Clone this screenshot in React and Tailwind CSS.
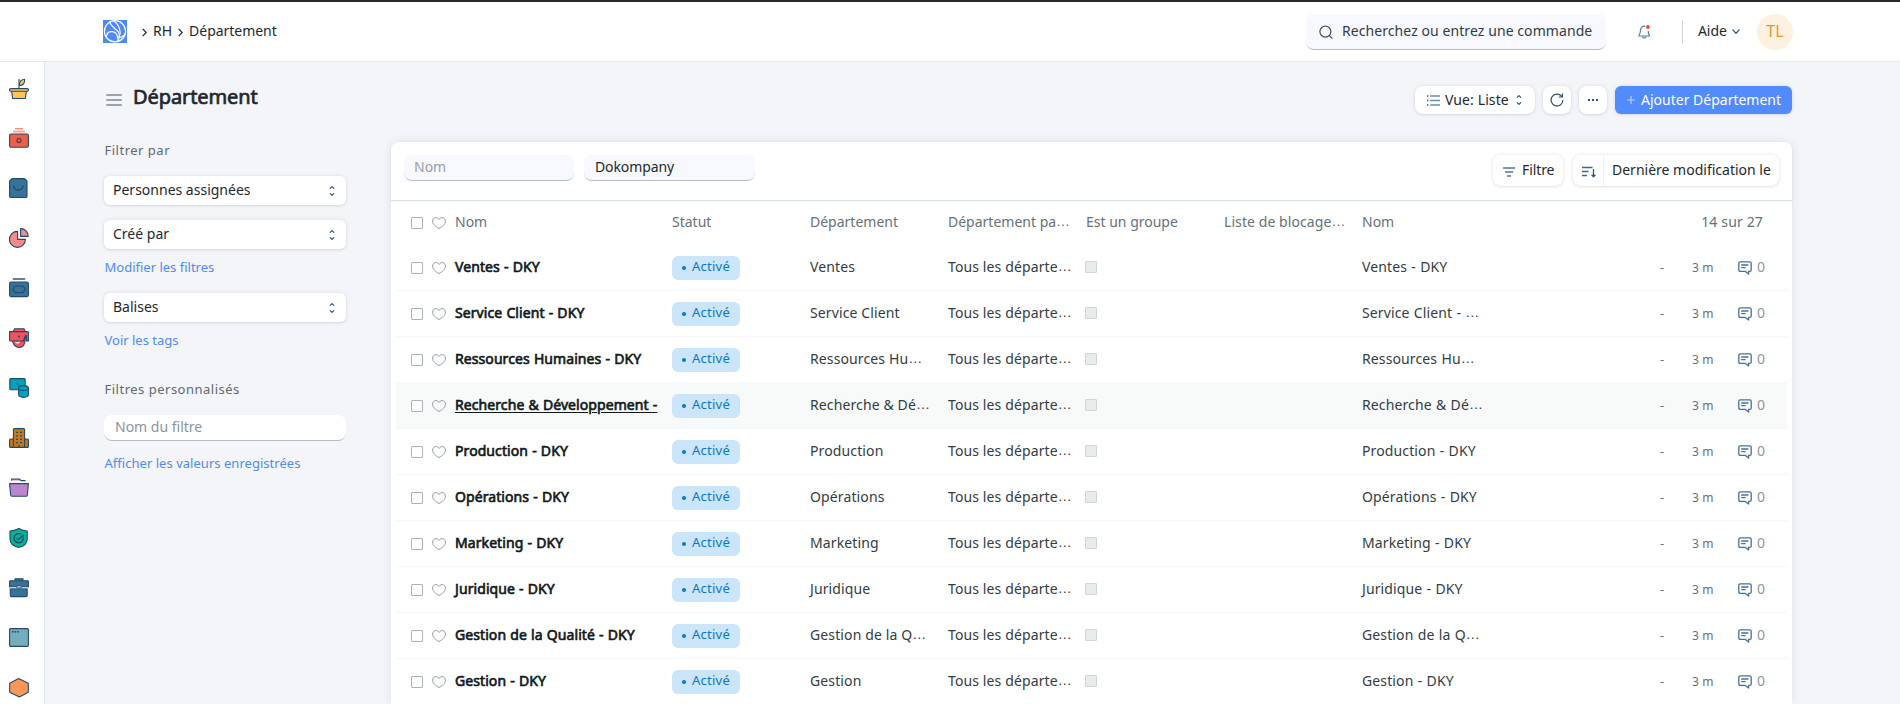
const OUT = '#23496d';

const APP_ICONS = [
  // plant pot
  <g key="pot">
    <path d="M10 10V1" fill="none" />
    <path d="M10.5 7.5C10 4 12 1.6 15.6 1.3C16 5 14 7.8 10.5 7.5Z" fill="#ffc35c" />
    <path d="M2.5 12.5H17.5L16.3 20.5H3.7Z" fill="#ffc35c" />
    <rect x="0.6" y="10.6" width="18.8" height="2.6" rx="1" fill="#ffc35c" />
  </g>,
  // bank notes
  <g key="notes">
    <path d="M6 0.8H14" stroke="#f0604a" strokeWidth="1" />
    <path d="M4 3.5H16" stroke="#f6a99c" strokeWidth="2" />
    <rect x="0.6" y="6" width="18.8" height="13.2" rx="1.5" fill="#ee6045" />
    <circle cx="10" cy="12.5" r="2" fill="none" stroke="#6b3d4b" strokeWidth="1.4" />
  </g>,
  // shopping bag
  <g key="bag">
    <path d="M3 0.6H15.5L18 3V18.2Q18 19.5 16.7 19.5H2Q0.6 19.5 0.6 18.2V3Z" fill="#377298" />
    <path d="M4.5 7.5C5.2 13.5 13.4 13.5 14.1 7.5" fill="none" strokeWidth="1.3" />
  </g>,
  // pie chart
  <g key="pie">
    <path d="M8.6 3.4A8 8 0 1 0 16.4 11.4H8.6Z" fill="#f68a8d" />
    <path d="M11.6 0.6A7.5 7.5 0 0 1 19.2 8.4H11.6Z" fill="#f68a8d" />
  </g>,
  // cash register
  <g key="cash">
    <path d="M3.8 1H16.2" strokeWidth="1.4" />
    <rect x="0.6" y="4" width="18.8" height="14.6" rx="1.5" fill="#377298" />
    <path d="M6 8H14L16.4 11.3L14 14.6H6L3.6 11.3Z" fill="none" strokeWidth="1.1" />
  </g>,
  // support agent
  <g key="support">
    <path d="M4.5 3.3L5.5 0.8H15L16 3.3" fill="#f4515f" />
    <path d="M3.5 9V12C3.5 16.5 6.5 19.4 10.4 19.4C14.3 19.4 16 16 16.2 12V9Z" fill="#f4515f" />
    <path d="M0.6 3.6H18.4Q19.4 3.6 19.4 4.6V13H17.4V7.5L14.4 13H1.6Q0.6 13 0.6 12Z" fill="#f4515f" />
    <path d="M6 13.4C7.5 14.6 9.5 14.4 11 13L10 15.3C8.4 15.9 7 15.3 6 13.4Z" fill="#fff" stroke="none" />
    <circle cx="10" cy="8.6" r="1" fill="#23496d" stroke="none" />
    <path d="M14.4 13L16.6 7.2" fill="none" />
  </g>,
  // data stack
  <g key="data">
    <rect x="0.8" y="0.6" width="15.4" height="11.2" rx="1" fill="#00a3b8" />
    <circle cx="8.6" cy="6" r="1" fill="#23496d" stroke="none" />
    <path d="M9.6 10V16.6C9.6 20.3 19.4 20.3 19.4 16.6V10Z" fill="#00a3b8" />
    <ellipse cx="14.5" cy="10" rx="4.9" ry="2.4" fill="#00a3b8" />
  </g>,
  // building
  <g key="building">
    <rect x="0.6" y="11" width="18.8" height="8.4" rx="1" fill="#c27a1c" />
    <rect x="4.4" y="0.6" width="11.2" height="18.8" rx="1" fill="#c27a1c" />
    <path d="M7 4.4H9M11 4.4H13M7 7.9H9M11 7.9H13M7 11.4H9M11 11.4H13M7 14.6H9M11 14.6H13" strokeWidth="1.3" />
    <path d="M10 16.8V19.2" />
  </g>,
  // folder
  <g key="folder">
    <path d="M2.6 2.6V1H10.4L12 2.6H16.6" fill="#be85cf" />
    <path d="M0.6 5.6H19.4L18.3 17.2Q18.2 18.2 17 18.2H3Q1.8 18.2 1.7 17.2Z" fill="#be85cf" />
  </g>,
  // shield
  <g key="shield">
    <path d="M9.8 0.5C12.5 2.2 15.5 3 18.2 3V11C18.2 15.5 14.5 18.4 9.8 19.5C5.1 18.4 1 15.5 1 11V3C4 3 7 2.2 9.8 0.5Z" fill="#00b592" />
    <path d="M14 8.7A4.6 4.6 0 1 1 12 6.2M7.8 10.2L9.4 11.8L14.6 6.6" fill="none" strokeWidth="1.3" />
  </g>,
  // briefcase
  <g key="briefcase">
    <path d="M6 2.8V0.8H14V2.8" fill="#377298" />
    <path d="M1.2 10.6H18.2V17.4Q18.2 18.6 17 18.6H2.6Q1.4 18.6 1.4 17.4Z" fill="#377298" />
    <path d="M1.4 2.8H18.6Q19.4 2.8 19.4 3.6V9H0.6V3.6Q0.6 2.8 1.4 2.8Z" fill="#377298" />
    <path d="M0.6 9.9H19.4" stroke="#fff" strokeWidth="0.8" />
    <rect x="7.8" y="8" width="4.6" height="1.8" fill="#fff" strokeWidth="0.8" />
  </g>,
  // window
  <g key="window">
    <rect x="0.6" y="0.6" width="18.8" height="17.8" rx="1.2" fill="#74aebd" />
    <path d="M3 3.7H4.6M5.6 3.7H7.2M8.2 3.7H9.8" strokeWidth="1.6" />
  </g>,
  // hexagon
  <g key="hex">
    <path d="M9.6 0.6L19.3 5.2V14.2L10.4 18.9L0.7 14.2V5.2Z" fill="#fd9657" />
  </g>,
];

const ROWS = [
  ['Ventes - DKY', 'Ventes', 'Ventes - DKY'],
  ['Service Client - DKY', 'Service Client', 'Service Client - …'],
  ['Ressources Humaines - DKY', 'Ressources Hu…', 'Ressources Hu…'],
  ['Recherche & Développement -', 'Recherche & Dé…', 'Recherche & Dé…'],
  ['Production - DKY', 'Production', 'Production - DKY'],
  ['Opérations - DKY', 'Opérations', 'Opérations - DKY'],
  ['Marketing - DKY', 'Marketing', 'Marketing - DKY'],
  ['Juridique - DKY', 'Juridique', 'Juridique - DKY'],
  ['Gestion de la Qualité - DKY', 'Gestion de la Q…', 'Gestion de la Q…'],
  ['Gestion - DKY', 'Gestion', 'Gestion - DKY'],
];

const CARD_SHADOW = 'shadow-[0_1px_2px_rgba(25,39,52,0.08),0_0_4px_rgba(25,39,52,0.1)]';

// Draws a trailing ellipsis in a wider face than the text before it.
function Cut({ text }) {
  if (!text.endsWith('…')) return text;
  return (
    <>
      {text.slice(0, -1)}
      <span className="align-[1px] font-['Liberation_Sans',sans-serif] leading-none tracking-[-0.6px]">…</span>
    </>
  );
}

function UpDown() {
  return (
    <svg width="6" height="12" viewBox="0 0 6 12" fill="none" stroke="#2f5878" strokeWidth="1.2" strokeLinecap="round" strokeLinejoin="round" className="shrink-0">
      <path d="M1.2 3.4L3 1.6L4.8 3.4M1.2 8.6L3 10.4L4.8 8.6" />
    </svg>
  );
}

function Heart() {
  return (
    <svg width="14" height="12" viewBox="0 0 14 12" fill="none" stroke="#8f9ba5" strokeWidth="1" className="ml-[9px] shrink-0">
      <path d="M7 11.5C3.5 9.6 0.6 7.4 0.6 4.1C0.6 2 2.1 0.6 3.9 0.6C5.2 0.6 6.3 1.3 7 2.4C7.7 1.3 8.8 0.6 10.1 0.6C11.9 0.6 13.4 2 13.4 4.1C13.4 7.4 10.5 9.6 7 11.5Z" />
    </svg>
  );
}

function CheckBox() {
  return <div className="h-3 w-3 shrink-0 rounded-[1px] border border-[#a9b4bd] bg-white" />;
}

function Select({ label, className = '' }) {
  return (
    <div className={`flex h-[29px] items-center justify-between rounded-md bg-white pr-[11px] pl-[9px] text-[#1f272e] ${CARD_SHADOW} ${className}`}>
      <span className="-mt-px">{label}</span>
      <UpDown />
    </div>
  );
}

function Header() {
  return (
    <header className="flex h-[62px] shrink-0 items-center border-t-2 border-b border-t-[#2b272b] border-b-[#e6eaee] bg-white pl-[103px] text-[#1f272e]">
      <svg width="24" height="23" viewBox="0 0 24 23" className="-mt-px shrink-0">
        <rect width="24" height="23" fill="#4f88fb" />
        <g fill="none" stroke="#fff" strokeWidth="1.2">
          <circle cx="12" cy="11.3" r="10.6" />
          <path d="M3.4 16.5C4 13 6.6 11.2 9.6 11.7C13.4 12.3 15 15.5 14.4 18.5" />
          <path d="M6.8 2.6C9 7.5 13 8.6 15.4 12.2C17.4 15.4 16.6 17.8 14.6 20.8" />
          <path d="M11 1C15.5 4.2 17.4 9 17.2 14.6" />
          <path d="M14.6 16.4C17.4 18 20.5 17 22.3 13.2" />
        </g>
      </svg>
      <svg width="5" height="9" viewBox="0 0 5 9" fill="none" stroke="#1f272e" strokeWidth="1.2" className="mt-px ml-[15px]">
        <path d="M0.7 0.8L4.2 4.5L0.7 8.2" />
      </svg>
      <span className="-mt-px ml-[6px]">RH</span>
      <svg width="5" height="9" viewBox="0 0 5 9" fill="none" stroke="#1f272e" strokeWidth="1.2" className="mt-px ml-[6px]">
        <path d="M0.7 0.8L4.2 4.5L0.7 8.2" />
      </svg>
      <span className="-mt-px ml-[6px] tracking-[-0.04px]">Département</span>
      <div className="mr-[107px] ml-auto flex items-center">
        <div className="flex h-9 w-[300px] items-center rounded-lg border-b border-[#b4bec8] bg-[#f7f9fe] pl-[13px] text-[#333c44]">
          <svg width="14" height="14" viewBox="0 0 14 14" fill="none" stroke="#44505a" strokeWidth="1.2" strokeLinecap="round" className="mt-px">
            <circle cx="6.4" cy="6.6" r="5.5" />
            <path d="M10.4 10.6L13 13.1" />
          </svg>
          <span className="ml-[9px] tracking-[0.08px]">Recherchez ou entrez une commande</span>
        </div>
        <svg width="13" height="14" viewBox="0 0 13 14" fill="none" stroke="#5f8099" strokeWidth="1.2" strokeLinejoin="round" className="ml-[32px]">
          <path d="M7.4 1.3C4.4 0.6 2.5 2.8 2.5 5.2C2.5 8 2 9 0.8 11H11.6C10.6 9.4 10.2 8.4 10.2 6" />
          <path d="M4.4 11.2C4.6 13.7 7.8 13.7 8 11.2" />
          <circle cx="9.9" cy="2" r="1.9" fill="#f8414a" stroke="none" />
        </svg>
        <div className="ml-[31px] h-6 w-px bg-[#ced6dc]" />
        <span className="-mt-px ml-[15px]">Aide</span>
        <svg width="8" height="6" viewBox="0 0 8 6" fill="none" stroke="#2f5878" strokeWidth="1.2" strokeLinecap="round" strokeLinejoin="round" className="mt-px ml-[5px]">
          <path d="M1 1L4 4.3L7 1" />
        </svg>
        <div className="ml-[17px] flex h-9 w-9 items-center justify-center rounded-full bg-[#fff1df] text-[16px] text-[#dd9a35]">TL</div>
      </div>
    </header>
  );
}

function Filters() {
  return (
    <div className="-mt-[2px] flex w-[242px] shrink-0 flex-col text-[13px] text-[#4f8bfa]">
      <div className="pl-[0.5px] leading-5 tracking-[0.5px] text-[#5f6a73]">Filtrer par</div>
      <Select label="Personnes assignées" className="mt-[16px] text-sm" />
      <Select label="Créé par" className="mt-[15px] text-sm" />
      <div className="mt-[8px] pl-[0.5px] leading-5">Modifier les filtres</div>
      <Select label="Balises" className="mt-[16px] text-sm" />
      <div className="mt-[8px] pl-[0.5px] leading-5">Voir les tags</div>
      <div className="mt-[29px] pl-[0.5px] leading-5 tracking-[0.5px] text-[#5f6a73]">Filtres personnalisés</div>
      <div className="mt-[16px] flex h-[26px] items-center rounded-lg border-b border-[#b4bec8] bg-white pl-[11px] text-sm text-[#8a949c]">
        <span className="-mt-px">Nom du filtre</span>
      </div>
      <div className="mt-[12px] pl-[0.5px] leading-5 tracking-[0.03px]">Afficher les valeurs enregistrées</div>
    </div>
  );
}

function PageHead() {
  return (
    <div className="flex h-[80px] w-[1688px] shrink-0 items-start pt-6 text-[#1f272e]">
      <div className="mt-[8px] ml-[2px] flex w-4 flex-col gap-[3px]">
        <div className="h-[2px] rounded-full bg-[#97a4ae]" />
        <div className="h-[2px] rounded-full bg-[#97a4ae]" />
        <div className="h-[2px] rounded-full bg-[#97a4ae]" />
      </div>
      <h1 className="-mt-[3px] ml-[11px] text-[20px] leading-[28px] tracking-[-0.1px] [-webkit-text-stroke:0.7px_#1f272e]">Département</h1>
      <div className="ml-auto flex gap-2">
        <div className={`flex h-7 w-[120px] items-center rounded-lg bg-white pl-3 ${CARD_SHADOW}`}>
          <svg width="13" height="11" viewBox="0 0 13 11" fill="none" stroke="#6f8ca7" strokeWidth="1.4" className="mt-px">
            <path d="M3.2 1H13M3.2 5.5H13M3.2 10H13" />
            <path d="M0 1H1.4M0 5.5H1.4M0 10H1.4" stroke="#2f5878" />
          </svg>
          <span className="ml-[5px] tracking-[0.1px]">Vue: Liste</span>
          <span className="ml-[7px]"><UpDown /></span>
        </div>
        <div className={`flex h-7 w-7 items-center justify-center rounded-lg bg-white ${CARD_SHADOW}`}>
          <svg width="14" height="14" viewBox="0 0 14 14" fill="none" stroke="#2f4f68" strokeWidth="1.2" strokeLinecap="round" strokeLinejoin="round">
            <path d="M12.9 7.3A5.9 5.9 0 1 1 11.6 3.3" />
            <path d="M12.4 0.8V4H9.2" />
          </svg>
        </div>
        <div className={`flex h-7 w-7 items-center justify-center gap-[2px] rounded-lg bg-white ${CARD_SHADOW}`}>
          <div className="h-[2px] w-[2px] bg-[#2f4f68]" />
          <div className="h-[2px] w-[2px] bg-[#2f4f68]" />
          <div className="h-[2px] w-[2px] bg-[#2f4f68]" />
        </div>
        <div className={`flex h-7 w-[177px] items-center rounded-md bg-[#528bfb] pl-[12px] text-white ${CARD_SHADOW}`}>
          <svg width="8" height="8" viewBox="0 0 8 8" stroke="#b9d0ff" strokeWidth="1.2">
            <path d="M4 0V8M0 4H8" />
          </svg>
          <span className="ml-[6px]">Ajouter Département</span>
        </div>
      </div>
    </div>
  );
}

function Toolbar() {
  return (
    <div className="flex h-[59px] shrink-0 items-start border-b border-[#d9e1e8] pt-[13px] pr-[13px] pl-[13px] shadow-[0_1px_2px_rgba(25,39,52,0.05)]">
      <div className="flex h-[26px] w-[170px] items-center rounded-lg border-b border-[#b4bec8] bg-[#f7f9fe] pl-[10px] text-[#98a1a9]">
        <span className="-mt-px">Nom</span>
      </div>
      <div className="ml-[10px] flex h-[26px] w-[171px] items-center rounded-lg border-b border-[#b4bec8] bg-[#f7f9fe] pl-[11px] text-[#1f272e]">
        <span className="-mt-px tracking-[-0.1px]">Dokompany</span>
      </div>
      <div className="ml-auto flex gap-[10px] text-[#1f272e]">
        <div className={`flex h-[31px] w-[70px] items-center rounded-lg bg-white pl-[10px] ${CARD_SHADOW}`}>
          <svg width="12" height="10" viewBox="0 0 12 10" fill="none" stroke="#7c97b0" strokeWidth="1.8" className="mt-[2px]">
            <path d="M0 1H12M2 5H10M4 9H8" />
          </svg>
          <span className="-mt-px ml-[7px] tracking-[-0.1px]">Filtre</span>
        </div>
        <div className={`flex h-[31px] w-[206px] items-center rounded-lg bg-white ${CARD_SHADOW}`}>
          <div className="flex h-full w-[31px] items-center border-r border-[#edf0f2] pl-[9px]">
            <svg width="14" height="12" viewBox="0 0 14 12" fill="none" stroke="#3f6887" strokeWidth="1.3" strokeLinejoin="round" className="mt-[2px]">
              <path d="M0 1.5H10.5M0 5.5H6.5M0 9.5H5" />
              <path d="M11.5 3V10.6M9.6 8.8L11.5 10.8L13.4 8.8" stroke="#2f5878" />
            </svg>
          </div>
          <span className="-mt-px ml-[8px] whitespace-nowrap">Dernière modification le</span>
        </div>
      </div>
    </div>
  );
}

function Row({ row, hovered }) {
  const [name, dept, name2] = row;
  return (
    <div className={`mx-[5px] flex h-[46px] shrink-0 items-center border-b border-[#f4f5fd] pl-[15px] tracking-[0.12px] text-[#333c44] ${hovered ? 'bg-[#f8faf9] shadow-[0_-1px_0_#f8faf9]' : ''}`}>
      <CheckBox />
      <Heart />
      <div className="-mt-px ml-[9px] w-[202px] shrink-0 whitespace-nowrap text-[#111920] tracking-[0.08px] [word-spacing:0.4px]">
        <span className={`[-webkit-text-stroke:0.65px_#111920] ${hovered ? 'underline underline-offset-[2px]' : ''}`}>{name}</span>
      </div>
      <div className="ml-[15px] w-[138px]">
        <div className="flex h-6 w-[68px] items-center rounded-md bg-[#cbe5fb] pl-[10px] text-[13px] text-[#0a76d0]">
          <div className="mt-px h-1 w-1 rounded-full bg-[#0a76d0]" />
          <span className="-mt-[3px] ml-[6px] tracking-[0.25px]">Activé</span>
        </div>
      </div>
      <div className="-mt-px w-[138px] whitespace-nowrap"><Cut text={dept} /></div>
      <div className="-mt-px w-[138px] whitespace-nowrap"><Cut text="Tous les départe…" /></div>
      <div className="w-[276px]">
        <div className="-mt-px -ml-px h-3 w-3 rounded-[1px] border border-[#d0d5d6] bg-[#e9ecec]" />
      </div>
      <div className="-mt-px w-[298px] whitespace-nowrap [word-spacing:0.5px]"><Cut text={name2} /></div>
      <div className="w-[32px] text-[13px] text-[#687178]">-</div>
      <div className="w-[46px] text-[12px] text-[#687178]">3 m</div>
      <svg width="14" height="14" viewBox="0 0 14 14" fill="none" stroke="#4a7193" strokeWidth="1.3" strokeLinejoin="round" className="shrink-0">
        <path d="M2.2 0.9H11.8Q13.2 0.9 13.2 2.3V9Q13.2 10.4 11.8 10.4H10.6V13L7.4 10.4H2.2Q0.8 10.4 0.8 9V2.3Q0.8 0.9 2.2 0.9Z" />
        <path d="M3.2 4H10.4M3.2 6.6H7.6" />
      </svg>
      <span className="-mt-px ml-[5px] text-[#8d979f]">0</span>
    </div>
  );
}

function ListPanel() {
  return (
    <div className="flex w-[1401px] shrink-0 flex-col rounded-t-lg bg-white shadow-[0_0_10px_rgba(25,39,52,0.1)]">
      <Toolbar />
      <div className="mx-[5px] flex h-[44px] shrink-0 items-center pl-[15px] text-[#66717a]">
        <CheckBox />
        <Heart />
        <div className="-mt-[2px] ml-[9px] w-[217px]">Nom</div>
        <div className="-mt-[2px] w-[138px]">Statut</div>
        <div className="-mt-[2px] w-[138px]">Département</div>
        <div className="-mt-[2px] w-[138px] whitespace-nowrap"><Cut text="Département pa…" /></div>
        <div className="-mt-[2px] w-[138px]">Est un groupe</div>
        <div className="-mt-[2px] w-[138px] whitespace-nowrap tracking-[0.08px]"><Cut text="Liste de blocage…" /></div>
        <div className="-mt-[2px]">Nom</div>
        <div className="-mt-[2px] mr-[24px] ml-auto tracking-[0.15px]">14 sur 27</div>
      </div>
      {ROWS.map((r, i) => (
        <Row key={r[0]} row={r} hovered={i === 3} />
      ))}
    </div>
  );
}

export default function App() {
  return (
    <div className="flex h-[704px] w-[1900px] flex-col overflow-hidden bg-[#f3f5f9] font-['Noto_Sans',sans-serif] text-sm">
      <Header />
      <div className="flex min-h-0 flex-1">
        <nav className="flex w-[45px] shrink-0 flex-col border-r border-[#d9e3ec] bg-white pt-px">
          {APP_ICONS.map((icon, i) => (
            <div key={i} className="flex h-[50px] shrink-0 items-center pl-[9px]">
              <svg width="20" height="21" viewBox="0 0 20 21" stroke={OUT} strokeWidth="1.1" strokeLinejoin="round">
                {icon}
              </svg>
            </div>
          ))}
        </nav>
        <main className="flex flex-1 flex-col pl-[59px]">
          <PageHead />
          <div className="flex min-h-0 w-[1688px] flex-1 justify-between">
            <Filters />
            <ListPanel />
          </div>
        </main>
      </div>
    </div>
  );
}
